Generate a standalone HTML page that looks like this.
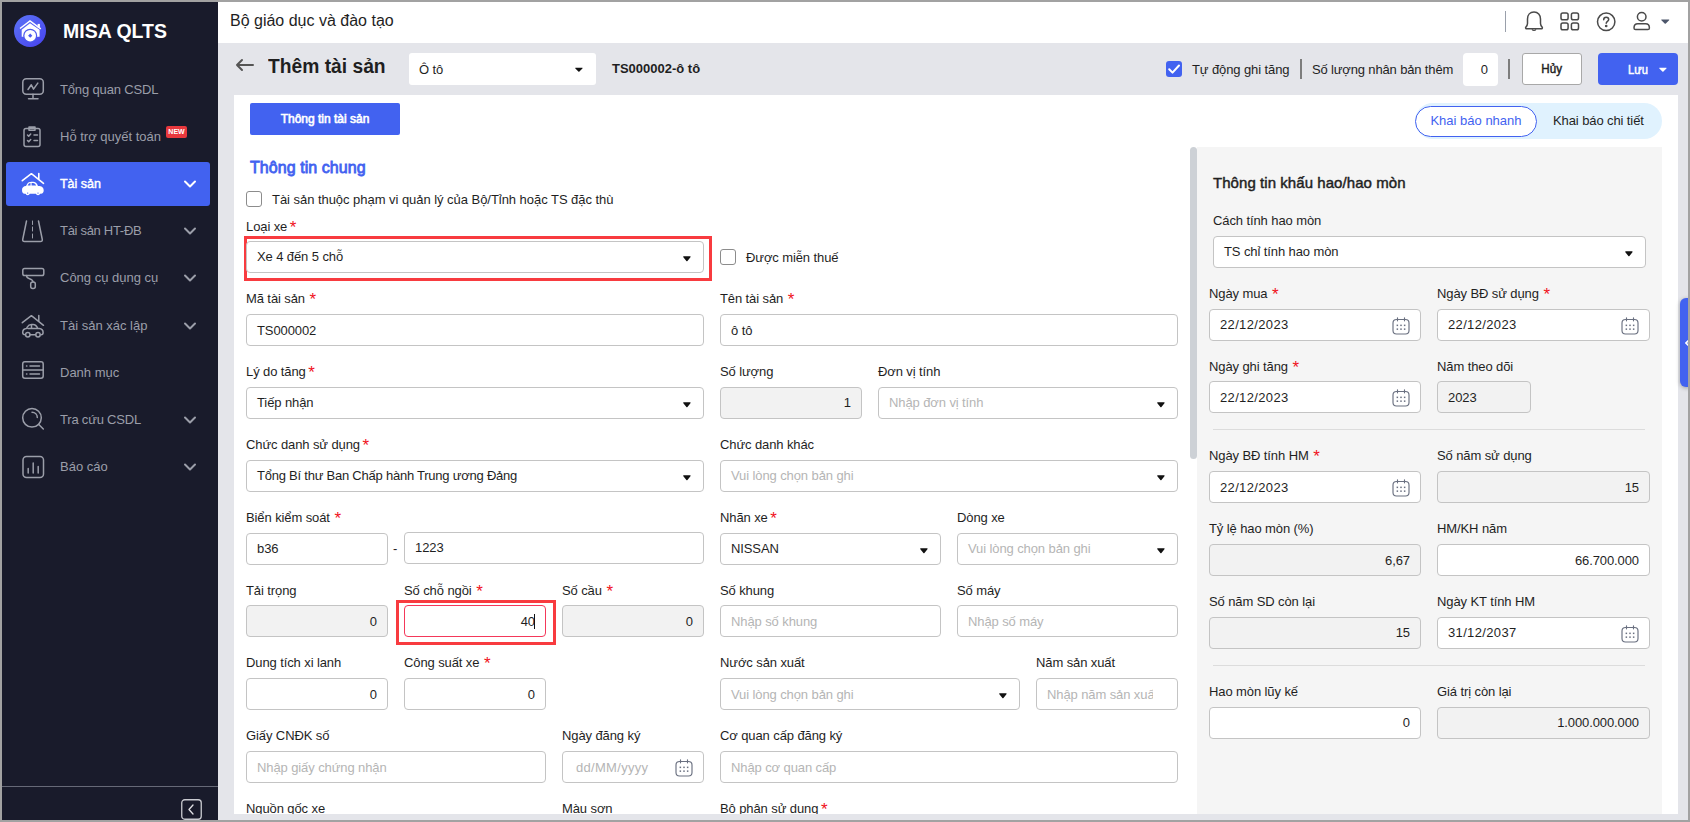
<!DOCTYPE html>
<html lang="vi">
<head>
<meta charset="utf-8">
<title>MISA QLTS - Thêm tài sản</title>
<style>
*{box-sizing:border-box;margin:0;padding:0}
html,body{width:1690px;height:822px;overflow:hidden}
body{font-family:"Liberation Sans",sans-serif;font-size:13px;color:#1f1f1f;background:#e4e5ea;position:relative}
div,span,svg{position:absolute}
.frame{left:0;top:0;width:1690px;height:822px;border:2px solid #a2a2a2;z-index:50;pointer-events:none}
#side{left:0;top:0;width:218px;height:822px;background:#191b2b}
.logo{left:14px;top:15px;width:32px;height:32px;border-radius:50%;background:linear-gradient(140deg,#5c74f6,#4742ee)}
.brand{left:63px;top:19px;font-size:20px;font-weight:700;color:#fff;line-height:24px;white-space:nowrap;transform:scaleX(0.974);transform-origin:0 0}
.mi{left:6px;width:204px;height:44px;border-radius:3px;color:#9b9ea9;font-size:13px}
.mi.act{background:#4262f0;color:#fff;font-weight:700}
.mi .tx{left:54px;top:0;line-height:44px;white-space:nowrap}
.mi.act .tx{transform:scaleX(0.96);transform-origin:0 0;font-weight:400;-webkit-text-stroke:0.45px}
.mi svg.ic{left:14px;top:9px;width:26px;height:26px;overflow:visible;fill:none;stroke:#9b9ea9;stroke-width:1.5;stroke-linecap:round;stroke-linejoin:round}
.mi.act svg.ic{stroke:#fff}
.mi svg.ch{left:178px;top:18px;width:12px;height:8px;overflow:visible;fill:none;stroke:#9b9ea9;stroke-width:2;stroke-linecap:round;stroke-linejoin:round}
.mi.act svg.ch{stroke:#fff}
.new{left:160px;top:11px;width:21px;height:12px;background:#e8383d;border-radius:2px;color:#fff;font-size:7px;font-weight:700;line-height:12px;text-align:center}
.shr{left:0;top:786px;width:218px;height:1px;background:#666977}
#top{left:218px;top:0;width:1472px;height:43px;background:#fff}
.org{left:230px;top:11px;font-size:16px;line-height:20px;color:#1f1f1f;white-space:nowrap}
.title{left:268px;top:54px;font-size:20px;font-weight:700;line-height:24px;color:#1f1f1f;white-space:nowrap;transform:scaleX(0.962);transform-origin:0 0}
#panel{left:234px;top:95px;width:1444px;height:719px;background:#fff}
#clip{left:0;top:0;width:1690px;height:822px;overflow:hidden}
.med{font-weight:400 !important;-webkit-text-stroke:0.45px}
.lb,.in,.txt{letter-spacing:-0.1px}
.lb{font-size:13px;line-height:16px;color:#1f1f1f;white-space:nowrap}
.lb i{position:static;font-style:normal;color:#f0121c;font-size:17px;line-height:0;vertical-align:-1.5px}
.in{height:31px;border:1px solid #c4c4c4;border-radius:4px;background:#fff;font-size:13px;line-height:29px;padding:0 10px;color:#1f1f1f;white-space:nowrap;overflow:hidden}
.in.dis{background:#f2f2f2}
.in.r{text-align:right;padding-right:10px}
.in.ph{color:#b5b5b5}
.car{width:0;height:0;border-left:4.5px solid transparent;border-right:4.5px solid transparent;border-top:5px solid #111;border-radius:2px}
.cv{width:7.800px;height:5.400px;fill:#111;overflow:visible}
.cb{width:16px;height:16px;border:1px solid #8c8c8c;border-radius:3px;background:#fff}
.red{border:3px solid #f83b3f}
.txt{white-space:nowrap;line-height:16px}
.cal{width:18px;height:18px;overflow:visible;fill:none;stroke:#6a7080;stroke-width:1.15}
.tico{overflow:visible;fill:none;stroke:#4a4a4a;stroke-width:1.5;stroke-linecap:round;stroke-linejoin:round}
</style>
</head>
<body>
<div id="clip">
<div id="side">
<div class="logo"></div>
<svg style="left:14px;top:15px;width:32px;height:32px" viewBox="0 0 32 32"><path d="M6 13.500 L16 6 L26.800 13.800" fill="none" stroke="#fff" stroke-width="1.500" stroke-linejoin="miter"/><rect x="23.600" y="8.900" width="2.300" height="3.600" fill="#fff"/><path d="M7.700 14.700 L16 8.300 L25.600 14.700 V21.800 H7.700 Z" fill="#fff"/><circle cx="16.200" cy="20.700" r="7" fill="#4d5aee"/><circle cx="16.200" cy="20.700" r="5.800" fill="#fff"/><path d="M16.200 18.600 L18.300 20.700 L16.200 22.800 L14.100 20.700 Z" fill="#4d5aee"/></svg>
<div class="brand">MISA QLTS</div>
<div class="mi" style="top:68px">
<svg class="ic" viewBox="0 0 26 26"><rect x="2.800" y="1.800" width="20.500" height="15.500" rx="3.500"/><path d="M13 17.300v4.200M8.500 21.800h9.500M8 12.500l3.300-4.700 2.200 4.300 4.300-6"/></svg>
<span class="tx" style="letter-spacing:-0.15px">Tổng quan CSDL</span>
</div>
<div class="mi" style="top:115px">
<svg class="ic" viewBox="0 0 26 26"><rect x="4" y="4.5" width="16" height="18" rx="2"/><path d="M9 4.5V3h6v1.5M9 3.2h6v3H9zM7.5 11l1.2 1.2 2-2.2M14 11h3.5M7.5 16.5l1.2 1.2 2-2.2M14 16.500h3.5"/></svg>
<span class="tx" style="letter-spacing:0px">Hỗ trợ quyết toán</span>
<span class="new">NEW</span>
</div>
<div class="mi act" style="top:162px">
<svg class="ic" viewBox="0 0 26 26"><path d="M2.300 9.700 L11.400 2.700 L23.500 12.300M18.800 8.200V2.600" stroke-width="1.600"/><path d="M2 19C2 16.500 3.500 15.200 6 15l1-1.700c1-1.800 2.400-2.500 4.500-2.500H13c2.400 0 3.800 1.200 5 4.200h1.500c3 .3 4.200 2 4.200 4.500 0 2-1 3.200-2.700 3.200H4.500C3 22.700 2 21.500 2 19z" fill="#fff" stroke="none"/><circle cx="7.700" cy="22.300" r="2" fill="#fff" stroke="none"/><circle cx="18" cy="22.300" r="2" fill="#fff" stroke="none"/><path d="M7.600 14.600l.9-1.600c.5-.7 1.200-1 2-1v2.600zM11.600 12H13c1.500 0 2.500.9 3.100 2.600h-4.500z" fill="#4262f0" stroke="none"/><circle cx="7.700" cy="22.100" r="0.700" fill="#4262f0" stroke="none"/><circle cx="18" cy="22.100" r="0.700" fill="#4262f0" stroke="none"/></svg>
<span class="tx" style="letter-spacing:0px">Tài sản</span>
<svg class="ch" viewBox="0 0 12 8"><path d="M1 1.5 L6 6.5 L11 1.5"/></svg>
</div>
<div class="mi" style="top:209px">
<svg class="ic" viewBox="0 0 26 26"><path d="M6.500 3 L2.700 21.500 Q2.500 23.500 4.500 23.500 H20.500 Q22.500 23.500 22.300 21.500 L18.500 3"/><path d="M12.500 3v3.500M12.500 9v4M12.500 16v4" stroke-width="1"/></svg>
<span class="tx" style="letter-spacing:-0.3px">Tài sản HT-ĐB</span>
<svg class="ch" viewBox="0 0 12 8"><path d="M1 1.5 L6 6.5 L11 1.5"/></svg>
</div>
<div class="mi" style="top:256px">
<svg class="ic" viewBox="0 0 26 26"><rect x="2.800" y="3.500" width="21" height="7" rx="1.800"/><path d="M6.500 10.500c0 2 1 2.600 3 3.200 2.600.800 3.500 1.300 3.500 3.300"/><rect x="10.700" y="17" width="4.600" height="6.600" rx="2"/></svg>
<span class="tx" style="letter-spacing:0px">Công cụ dụng cụ</span>
<svg class="ch" viewBox="0 0 12 8"><path d="M1 1.5 L6 6.5 L11 1.5"/></svg>
</div>
<div class="mi" style="top:304px">
<svg class="ic" viewBox="0 0 26 26"><path d="M2.300 9.700 L11.400 2.700 L23.500 12.300M18.800 8.200V2.600"/><path d="M2.700 19.500c0-2.500 1.300-3.800 3.800-4l.8-1.500c1-1.800 2.200-2.500 4.200-2.500H13c2.300 0 3.600 1.100 4.800 4h1.400c2.800.3 3.900 1.800 3.900 4 0 1.500-.8 2.300-2 2.300M15.500 21.800h-5.300M5.300 21.800c-1.600 0-2.600-.8-2.600-2.300M8 15.500h9.500M11.500 11.800v3.500"/><circle cx="7.800" cy="21.800" r="2.200"/><circle cx="18" cy="21.800" r="2.200"/></svg>
<span class="tx" style="letter-spacing:0px">Tài sản xác lập</span>
<svg class="ch" viewBox="0 0 12 8"><path d="M1 1.5 L6 6.5 L11 1.5"/></svg>
</div>
<div class="mi" style="top:351px">
<svg class="ic" viewBox="0 0 26 26"><rect x="2.700" y="1.700" width="20.500" height="16.500" rx="2.200"/><path d="M2.700 10h20.500M6.500 6h.4M10 6h9.500M6.500 14h.4M10 14h9.500"/></svg>
<span class="tx" style="letter-spacing:0px">Danh mục</span>
</div>
<div class="mi" style="top:398px">
<svg class="ic" viewBox="0 0 26 26"><circle cx="12" cy="10.800" r="9.300"/><path d="M18.800 17.500l4.500 4.500M12 5.300c3 0 5.300 2.300 5.300 5.300"/></svg>
<span class="tx" style="letter-spacing:-0.2px">Tra cứu CSDL</span>
<svg class="ch" viewBox="0 0 12 8"><path d="M1 1.5 L6 6.5 L11 1.5"/></svg>
</div>
<div class="mi" style="top:445px">
<svg class="ic" viewBox="0 0 26 26"><rect x="3" y="2.500" width="20.500" height="21" rx="3.500"/><path d="M8.200 19v-4.500M13.200 19V9M18.200 19v-6.500"/></svg>
<span class="tx" style="letter-spacing:0px">Báo cáo</span>
<svg class="ch" viewBox="0 0 12 8"><path d="M1 1.5 L6 6.5 L11 1.5"/></svg>
</div>
<div class="shr"></div>
<svg style="left:181px;top:799px;width:21px;height:21px" viewBox="0 0 21 21"><rect x="0.750" y="0.750" width="19.500" height="19.500" rx="3" fill="none" stroke="#c9cad0" stroke-width="1.300"/><path d="M12 6 L8 10.500 L12 15" fill="none" stroke="#e0e0e4" stroke-width="1.300" stroke-linecap="round" stroke-linejoin="round"/></svg>
</div>
<div id="top"></div>
<div class="org">Bộ giáo dục và đào tạo</div>
<div style="left:1505px;top:11px;width:1px;height:21px;background:#9aa0ab"></div>
<svg class="tico" style="left:1523px;top:10px;width:22px;height:22px" viewBox="0 0 22 22"><path d="M11 2C7 2 4.500 5 4.500 9v4.500c0 1.500-.7 2.500-1.700 3.700-.5.800 0 1.600 1 1.600h14.400c1 0 1.500-.8 1-1.600-1-1.200-1.700-2.200-1.700-3.700V9C17.500 5 15 2 11 2z"/><path d="M9.300 19.800c.5.900 2.900.900 3.400 0" stroke-width="1.300"/></svg>
<svg class="tico" style="left:1560px;top:12px;width:20px;height:19px" viewBox="0 0 20 19"><rect x="1" y="0.900" width="7.100" height="6.900" rx="1.800"/><rect x="11.400" y="0.900" width="7.100" height="6.900" rx="1.800"/><rect x="1" y="10.900" width="7.100" height="6.900" rx="1.800"/><rect x="11.400" y="10.900" width="7.100" height="6.900" rx="1.800"/></svg>
<svg class="tico" style="left:1596px;top:11.500px;width:20px;height:20px" viewBox="0 0 20 20"><circle cx="10.200" cy="9.800" r="8.700"/><path d="M7.700 7.800c0-1.500 1-2.500 2.500-2.500s2.500 1 2.500 2.300c0 1.700-2.500 1.900-2.500 3.700"/><circle cx="10.200" cy="14" r="0.600" fill="#4a4a4a"/></svg>
<svg class="tico" style="left:1632px;top:12px;width:19px;height:19px" viewBox="0 0 19 19"><ellipse cx="9.700" cy="4.700" rx="4.300" ry="4.300"/><path d="M2 16c0-2.800 1.300-4.200 3.800-4.200h7.800c2.500 0 3.800 1.400 3.800 4.200 0 1-.6 1.600-1.600 1.600H3.600C2.600 17.600 2 17 2 16z"/></svg>
<svg class="cv" style="left:1661.300px;top:18.800px;width:8.500px;height:5px;fill:#4d566b" viewBox="0 0 9 5"><path d="M0.800 0.300h7.400c.5 0 .7.500.4.800L5.100 4.600c-.3.300-.9.300-1.200 0L.4 1.100C.1.800.3.300.8.300z"/></svg>
<svg style="left:235px;top:58px;width:20px;height:14px" viewBox="0 0 20 14"><path d="M2 7H18M7 2L2 7l5 5" fill="none" stroke="#555" stroke-width="2" stroke-linecap="round" stroke-linejoin="round"/></svg>
<div class="title">Thêm tài sản</div>
<div class="in" style="left:409px;top:53px;width:187px;height:32px;border:none;border-radius:3px;line-height:34px">Ô tô</div>
<svg class="cv" style="left:574.800px;top:67px" viewBox="0 0 9 5"><path d="M0.800 0.300h7.400c.5 0 .7.500.4.800L5.100 4.600c-.3.300-.9.300-1.200 0L.4 1.100C.1.800.3.300.8.300z"/></svg>
<div class="txt" style="left:612px;top:61px;font-weight:700;font-size:13px;color:#1f1f1f;letter-spacing:0">TS000002-ô tô</div>
<div style="left:1166px;top:61px;width:16px;height:16px;border-radius:3px;background:#4262f0"></div>
<svg style="left:1166px;top:61px;width:16px;height:16px" viewBox="0 0 16 16"><path d="M3.200 8.300 L6.500 11.600 L13 4.500" fill="none" stroke="#fff" stroke-width="2" stroke-linecap="round" stroke-linejoin="round"/></svg>
<div class="txt" style="left:1192px;top:62px">Tự động ghi tăng</div>
<div style="left:1300px;top:59px;width:2px;height:20px;background:#7d7d7d"></div>
<div class="txt" style="left:1312px;top:62px;letter-spacing:-0.15px">Số lượng nhân bản thêm</div>
<div class="in r" style="left:1463px;top:53px;width:35px;height:33px;border:none;border-radius:4px;line-height:33px">0</div>
<div style="left:1508px;top:59px;width:2px;height:20px;background:#7d7d7d"></div>
<div style="left:1522px;top:53px;width:60px;height:32px;border:1px solid #a8a8a8;border-radius:3px;background:#fff;text-align:center;line-height:31px;font-weight:700;font-size:12px;color:#1f1f1f"><span class="med" style="position:static;display:inline-block;transform:scaleX(0.97)">Hủy</span></div>
<div style="left:1598px;top:53px;width:80px;height:32px;border-radius:4px;background:#4262f0"></div>
<div class="txt med" style="left:1628px;top:62px;font-size:12px;color:#fff;transform:scaleX(0.93);transform-origin:0 0;letter-spacing:0">Lưu</div>
<svg class="cv" style="left:1658.500px;top:67px;fill:#fff" viewBox="0 0 9 5"><path d="M0.800 0.300h7.400c.5 0 .7.500.4.800L5.100 4.600c-.3.300-.9.300-1.200 0L.4 1.100C.1.800.3.300.8.300z"/></svg>
<div id="panel"></div>
<div style="left:250px;top:103px;width:150px;height:32px;background:#4262f0;border-radius:2px;color:#fff;font-weight:700;font-size:12px;line-height:32px;text-align:center"><span class="med" style="position:static;letter-spacing:0;-webkit-text-stroke:0.6px">Thông tin tài sản</span></div>
<div style="left:1415px;top:103px;width:247px;height:36px;border-radius:18px;background:#e0f2fe"></div>
<div style="left:1415px;top:106px;width:122px;height:31px;border-radius:16px;background:#fff;border:1px solid #4262f0;color:#4262f0;text-align:center;line-height:27px;font-size:13px">Khai báo nhanh</div>
<div class="txt" style="left:1553px;top:113px">Khai báo chi tiết</div>
<div class="txt med" style="left:250px;top:159px;font-size:16px;color:#4262f0;line-height:18px;letter-spacing:0.06px;-webkit-text-stroke:0.8px">Thông tin chung</div>
<div class="cb" style="left:246px;top:191px"></div>
<div class="txt" style="left:272px;top:192px;letter-spacing:-0.04px">Tài sản thuộc phạm vi quản lý của Bộ/Tỉnh hoặc TS đặc thù</div>
<div class="lb" style="left:246px;top:219px">Loại xe<i style="margin-left:2.6px">*</i></div>
<div class="red" style="left:244px;top:236px;width:468px;height:45px"></div>
<div class="in " style="left:246px;top:241px;width:458px;height:32px;line-height:30px;">Xe 4 đến 5 chỗ</div>
<svg class="cv" preserveAspectRatio="none" style="left:682.7px;top:255.7px" viewBox="0 0 9 5"><path d="M0.800 0.300h7.400c.5 0 .7.500.4.800L5.100 4.600c-.3.300-.9.300-1.200 0L.400 1.100C.1.800.3.300.8.300z"/></svg>
<div class="cb" style="left:720px;top:249px"></div>
<div class="txt" style="left:746px;top:250px">Được miễn thuế</div>
<div class="lb" style="left:246px;top:291px">Mã tài sản<i style="margin-left:4.6px">*</i></div>
<div class="in " style="left:246px;top:314px;width:458px;height:32px;line-height:32px;">TS000002</div>
<div class="lb" style="left:720px;top:291px">Tên tài sản<i style="margin-left:4.6px">*</i></div>
<div class="in " style="left:720px;top:314px;width:458px;height:32px;line-height:32px;">ô tô</div>
<div class="lb" style="left:246px;top:364px">Lý do tăng<i style="margin-left:2.6px">*</i></div>
<div class="in " style="left:246px;top:387px;width:458px;height:32px;line-height:30px;">Tiếp nhận</div>
<svg class="cv" preserveAspectRatio="none" style="left:682.7px;top:401.7px" viewBox="0 0 9 5"><path d="M0.800 0.300h7.400c.5 0 .7.500.4.800L5.100 4.600c-.3.300-.9.300-1.200 0L.400 1.100C.1.800.3.300.8.300z"/></svg>
<div class="lb" style="left:720px;top:364px">Số lượng</div>
<div class="in dis r" style="left:720px;top:387px;width:142px;height:32px;line-height:30px;">1</div>
<div class="lb" style="left:878px;top:364px">Đơn vị tính</div>
<div class="in ph" style="left:878px;top:387px;width:300px;height:32px;line-height:30px;">Nhập đơn vị tính</div>
<svg class="cv" preserveAspectRatio="none" style="left:1156.7px;top:401.7px" viewBox="0 0 9 5"><path d="M0.800 0.300h7.400c.5 0 .7.500.4.800L5.100 4.600c-.3.300-.9.300-1.200 0L.400 1.100C.1.800.3.300.8.300z"/></svg>
<div class="lb" style="left:246px;top:437px">Chức danh sử dụng<i style="margin-left:2.6px">*</i></div>
<div class="in " style="left:246px;top:460px;width:458px;height:32px;line-height:30px;"><span style="position:static;letter-spacing:-0.23px">Tổng Bí thư Ban Chấp hành Trung ương Đảng</span></div>
<svg class="cv" preserveAspectRatio="none" style="left:682.7px;top:474.7px" viewBox="0 0 9 5"><path d="M0.800 0.300h7.400c.5 0 .7.500.4.800L5.100 4.600c-.3.300-.9.300-1.200 0L.400 1.100C.1.800.3.300.8.300z"/></svg>
<div class="lb" style="left:720px;top:437px">Chức danh khác</div>
<div class="in ph" style="left:720px;top:460px;width:458px;height:32px;line-height:30px;">Vui lòng chọn bản ghi</div>
<svg class="cv" preserveAspectRatio="none" style="left:1156.7px;top:474.7px" viewBox="0 0 9 5"><path d="M0.800 0.300h7.400c.5 0 .7.500.4.800L5.100 4.600c-.3.300-.9.300-1.200 0L.400 1.100C.1.800.3.300.8.300z"/></svg>
<div class="lb" style="left:246px;top:510px">Biển kiểm soát<i style="margin-left:4.6px">*</i></div>
<div class="in " style="left:246px;top:533px;width:142px;height:32px;line-height:30px;">b36</div>
<div class="txt" style="left:393px;top:541px">-</div>
<div class="in " style="left:404px;top:532px;width:300px;height:32px;line-height:30px;">1223</div>
<div class="lb" style="left:720px;top:510px">Nhãn xe<i style="margin-left:2.6px">*</i></div>
<div class="in " style="left:720px;top:533px;width:221px;height:32px;line-height:30px;">NISSAN</div>
<svg class="cv" preserveAspectRatio="none" style="left:919.7px;top:547.7px" viewBox="0 0 9 5"><path d="M0.800 0.300h7.400c.5 0 .7.500.4.800L5.100 4.600c-.3.300-.9.300-1.200 0L.400 1.100C.1.800.3.300.8.300z"/></svg>
<div class="lb" style="left:957px;top:510px">Dòng xe</div>
<div class="in ph" style="left:957px;top:533px;width:221px;height:32px;line-height:30px;">Vui lòng chọn bản ghi</div>
<svg class="cv" preserveAspectRatio="none" style="left:1156.7px;top:547.7px" viewBox="0 0 9 5"><path d="M0.800 0.300h7.400c.5 0 .7.500.4.800L5.100 4.600c-.3.300-.9.300-1.200 0L.400 1.100C.1.800.3.300.8.300z"/></svg>
<div class="lb" style="left:246px;top:583px">Tải trọng</div>
<div class="in dis r" style="left:246px;top:605px;width:142px;height:32px;line-height:32px;">0</div>
<div class="lb" style="left:404px;top:583px">Số chỗ ngồi<i style="margin-left:4.6px">*</i></div>
<div class="red" style="left:396px;top:600px;width:160px;height:45px"></div>
<div class="in r" style="left:404px;top:605px;width:142px;height:32px;line-height:32px;border-color:#f4385a;">40</div>
<div style="left:534px;top:614px;width:1px;height:15px;background:#111"></div>
<div class="lb" style="left:562px;top:583px">Số cầu<i style="margin-left:4.6px">*</i></div>
<div class="in dis r" style="left:562px;top:605px;width:142px;height:32px;line-height:32px;">0</div>
<div class="lb" style="left:720px;top:583px">Số khung</div>
<div class="in ph" style="left:720px;top:605px;width:221px;height:32px;line-height:32px;">Nhập số khung</div>
<div class="lb" style="left:957px;top:583px">Số máy</div>
<div class="in ph" style="left:957px;top:605px;width:221px;height:32px;line-height:32px;">Nhập số máy</div>
<div class="lb" style="left:246px;top:655px">Dung tích xi lanh</div>
<div class="in r" style="left:246px;top:678px;width:142px;height:32px;line-height:32px;">0</div>
<div class="lb" style="left:404px;top:655px">Công suất xe<i style="margin-left:4.6px">*</i></div>
<div class="in r" style="left:404px;top:678px;width:142px;height:32px;line-height:32px;">0</div>
<div class="lb" style="left:720px;top:655px">Nước sản xuất</div>
<div class="in ph" style="left:720px;top:678px;width:300px;height:32px;line-height:32px;">Vui lòng chọn bản ghi</div>
<svg class="cv" preserveAspectRatio="none" style="left:998.7px;top:692.7px" viewBox="0 0 9 5"><path d="M0.800 0.300h7.400c.5 0 .7.500.4.800L5.100 4.600c-.3.300-.9.300-1.200 0L.400 1.100C.1.800.3.300.8.300z"/></svg>
<div class="lb" style="left:1036px;top:655px">Năm sản xuất</div>
<div class="in ph" style="left:1036px;top:678px;width:142px;height:32px;line-height:32px;"><span style="position:static;display:inline-block;width:106px;overflow:hidden;vertical-align:top">Nhập năm sản xuất</span></div>
<div class="lb" style="left:246px;top:728px">Giấy CNĐK số</div>
<div class="in ph" style="left:246px;top:751px;width:300px;height:32px;line-height:32px;">Nhập giấy chứng nhận</div>
<div class="lb" style="left:562px;top:728px">Ngày đăng ký</div>
<div class="in ph" style="left:562px;top:751px;width:142px;height:32px;line-height:32px;"><span style="position:static;margin-left:3px;letter-spacing:0.3px">dd/MM/yyyy</span></div>
<svg class="cal" style="left:675px;top:759px" viewBox="0 0 18 18"><rect x="1" y="2.500" width="16" height="14.500" rx="3.500"/><path d="M5.500 0.800v3M12.500 0.800v3" stroke-linecap="round"/><g fill="#6a7080" stroke="none"><rect x="4.600" y="7.600" width="1.500" height="1.500"/><rect x="8.250" y="7.600" width="1.500" height="1.500"/><rect x="11.900" y="7.600" width="1.500" height="1.500"/><rect x="4.600" y="11.400" width="1.500" height="1.500"/><rect x="8.250" y="11.400" width="1.500" height="1.500"/><rect x="11.900" y="11.400" width="1.500" height="1.500"/></g></svg>
<div class="lb" style="left:720px;top:728px">Cơ quan cấp đăng ký</div>
<div class="in ph" style="left:720px;top:751px;width:458px;height:32px;line-height:32px;">Nhập cơ quan cấp</div>
<div class="lb" style="left:246px;top:801px">Nguồn gốc xe</div>
<div class="lb" style="left:562px;top:801px">Màu sơn</div>
<div class="lb" style="left:720px;top:801px">Bộ phận sử dụng<i style="margin-left:2.6px">*</i></div>
<div style="left:1190px;top:147px;width:7px;height:312px;border-radius:4px;background:#cdd1d6"></div>
<div style="left:1197px;top:147px;width:465px;height:680px;background:#f5f5f5"></div>
<div class="txt med" style="left:1213px;top:174px;font-size:15px;line-height:18px;letter-spacing:0.06px">Thông tin khấu hao/hao mòn</div>
<div class="lb" style="left:1213px;top:213px">Cách tính hao mòn</div>
<div class="in " style="left:1213px;top:236px;width:433px;height:32px;line-height:30px;">TS chỉ tính hao mòn</div>
<svg class="cv" preserveAspectRatio="none" style="left:1624.7px;top:250.7px" viewBox="0 0 9 5"><path d="M0.800 0.300h7.400c.5 0 .7.500.4.800L5.100 4.600c-.3.300-.9.300-1.200 0L.400 1.100C.1.800.3.300.8.300z"/></svg>
<div class="lb" style="left:1209px;top:286px">Ngày mua<i style="margin-left:4.6px">*</i></div>
<div class="in date" style="left:1209px;top:309px;width:212px;height:32px;line-height:30px;"><span style="position:static;letter-spacing:0.35px">22/12/2023</span></div>
<svg class="cal" style="left:1392px;top:317px" viewBox="0 0 18 18"><rect x="1" y="2.500" width="16" height="14.500" rx="3.500"/><path d="M5.500 0.800v3M12.500 0.800v3" stroke-linecap="round"/><g fill="#6a7080" stroke="none"><rect x="4.600" y="7.600" width="1.500" height="1.500"/><rect x="8.250" y="7.600" width="1.500" height="1.500"/><rect x="11.900" y="7.600" width="1.500" height="1.500"/><rect x="4.600" y="11.400" width="1.500" height="1.500"/><rect x="8.250" y="11.400" width="1.500" height="1.500"/><rect x="11.900" y="11.400" width="1.500" height="1.500"/></g></svg>
<div class="lb" style="left:1437px;top:286px">Ngày BĐ sử dụng<i style="margin-left:4.6px">*</i></div>
<div class="in date" style="left:1437px;top:309px;width:213px;height:32px;line-height:30px;"><span style="position:static;letter-spacing:0.35px">22/12/2023</span></div>
<svg class="cal" style="left:1621px;top:317px" viewBox="0 0 18 18"><rect x="1" y="2.500" width="16" height="14.500" rx="3.500"/><path d="M5.500 0.800v3M12.500 0.800v3" stroke-linecap="round"/><g fill="#6a7080" stroke="none"><rect x="4.600" y="7.600" width="1.500" height="1.500"/><rect x="8.250" y="7.600" width="1.500" height="1.500"/><rect x="11.900" y="7.600" width="1.500" height="1.500"/><rect x="4.600" y="11.400" width="1.500" height="1.500"/><rect x="8.250" y="11.400" width="1.500" height="1.500"/><rect x="11.900" y="11.400" width="1.500" height="1.500"/></g></svg>
<div class="lb" style="left:1209px;top:359px">Ngày ghi tăng<i style="margin-left:4.6px">*</i></div>
<div class="in date" style="left:1209px;top:381px;width:212px;height:32px;line-height:32px;"><span style="position:static;letter-spacing:0.35px">22/12/2023</span></div>
<svg class="cal" style="left:1392px;top:389px" viewBox="0 0 18 18"><rect x="1" y="2.500" width="16" height="14.500" rx="3.500"/><path d="M5.500 0.800v3M12.500 0.800v3" stroke-linecap="round"/><g fill="#6a7080" stroke="none"><rect x="4.600" y="7.600" width="1.500" height="1.500"/><rect x="8.250" y="7.600" width="1.500" height="1.500"/><rect x="11.900" y="7.600" width="1.500" height="1.500"/><rect x="4.600" y="11.400" width="1.500" height="1.500"/><rect x="8.250" y="11.400" width="1.500" height="1.500"/><rect x="11.900" y="11.400" width="1.500" height="1.500"/></g></svg>
<div class="lb" style="left:1437px;top:359px">Năm theo dõi</div>
<div class="in dis" style="left:1437px;top:381px;width:94px;height:32px;line-height:32px;">2023</div>
<div style="left:1213px;top:429px;width:432px;height:1px;background:#dcdcdc"></div>
<div class="lb" style="left:1209px;top:448px">Ngày BĐ tính HM<i style="margin-left:4.6px">*</i></div>
<div class="in date" style="left:1209px;top:471px;width:212px;height:32px;line-height:32px;"><span style="position:static;letter-spacing:0.35px">22/12/2023</span></div>
<svg class="cal" style="left:1392px;top:479px" viewBox="0 0 18 18"><rect x="1" y="2.500" width="16" height="14.500" rx="3.500"/><path d="M5.500 0.800v3M12.500 0.800v3" stroke-linecap="round"/><g fill="#6a7080" stroke="none"><rect x="4.600" y="7.600" width="1.500" height="1.500"/><rect x="8.250" y="7.600" width="1.500" height="1.500"/><rect x="11.900" y="7.600" width="1.500" height="1.500"/><rect x="4.600" y="11.400" width="1.500" height="1.500"/><rect x="8.250" y="11.400" width="1.500" height="1.500"/><rect x="11.900" y="11.400" width="1.500" height="1.500"/></g></svg>
<div class="lb" style="left:1437px;top:448px">Số năm sử dụng</div>
<div class="in dis r" style="left:1437px;top:471px;width:213px;height:32px;line-height:32px;">15</div>
<div class="lb" style="left:1209px;top:521px">Tỷ lệ hao mòn (%)</div>
<div class="in dis r" style="left:1209px;top:544px;width:212px;height:32px;line-height:32px;">6,67</div>
<div class="lb" style="left:1437px;top:521px">HM/KH năm</div>
<div class="in r" style="left:1437px;top:544px;width:213px;height:32px;line-height:32px;">66.700.000</div>
<div class="lb" style="left:1209px;top:594px">Số năm SD còn lại</div>
<div class="in dis r" style="left:1209px;top:617px;width:212px;height:32px;line-height:30px;">15</div>
<div class="lb" style="left:1437px;top:594px">Ngày KT tính HM</div>
<div class="in date" style="left:1437px;top:617px;width:213px;height:32px;line-height:30px;"><span style="position:static;letter-spacing:0.35px">31/12/2037</span></div>
<svg class="cal" style="left:1621px;top:625px" viewBox="0 0 18 18"><rect x="1" y="2.500" width="16" height="14.500" rx="3.500"/><path d="M5.500 0.800v3M12.500 0.800v3" stroke-linecap="round"/><g fill="#6a7080" stroke="none"><rect x="4.600" y="7.600" width="1.500" height="1.500"/><rect x="8.250" y="7.600" width="1.500" height="1.500"/><rect x="11.900" y="7.600" width="1.500" height="1.500"/><rect x="4.600" y="11.400" width="1.500" height="1.500"/><rect x="8.250" y="11.400" width="1.500" height="1.500"/><rect x="11.900" y="11.400" width="1.500" height="1.500"/></g></svg>
<div style="left:1213px;top:665px;width:432px;height:1px;background:#dcdcdc"></div>
<div class="lb" style="left:1209px;top:684px">Hao mòn lũy kế</div>
<div class="in r" style="left:1209px;top:707px;width:212px;height:32px;line-height:30px;">0</div>
<div class="lb" style="left:1437px;top:684px">Giá trị còn lại</div>
<div class="in dis r" style="left:1437px;top:707px;width:213px;height:32px;line-height:30px;">1.000.000.000</div>
<div style="left:218px;top:814px;width:1472px;height:8px;background:#e4e5ea"></div>
<div style="left:1680px;top:298px;width:10px;height:89px;border-radius:6px 0 0 6px;background:#4262f0;box-shadow:0 1px 4px rgba(0,0,0,.3)"></div>
<svg style="left:1685px;top:339px;width:5px;height:8px" viewBox="0 0 5 8"><path d="M4 1L1 4l3 3" fill="none" stroke="#fff" stroke-width="1.700"/></svg>
</div>
<div class="frame"></div>
</body>
</html>
